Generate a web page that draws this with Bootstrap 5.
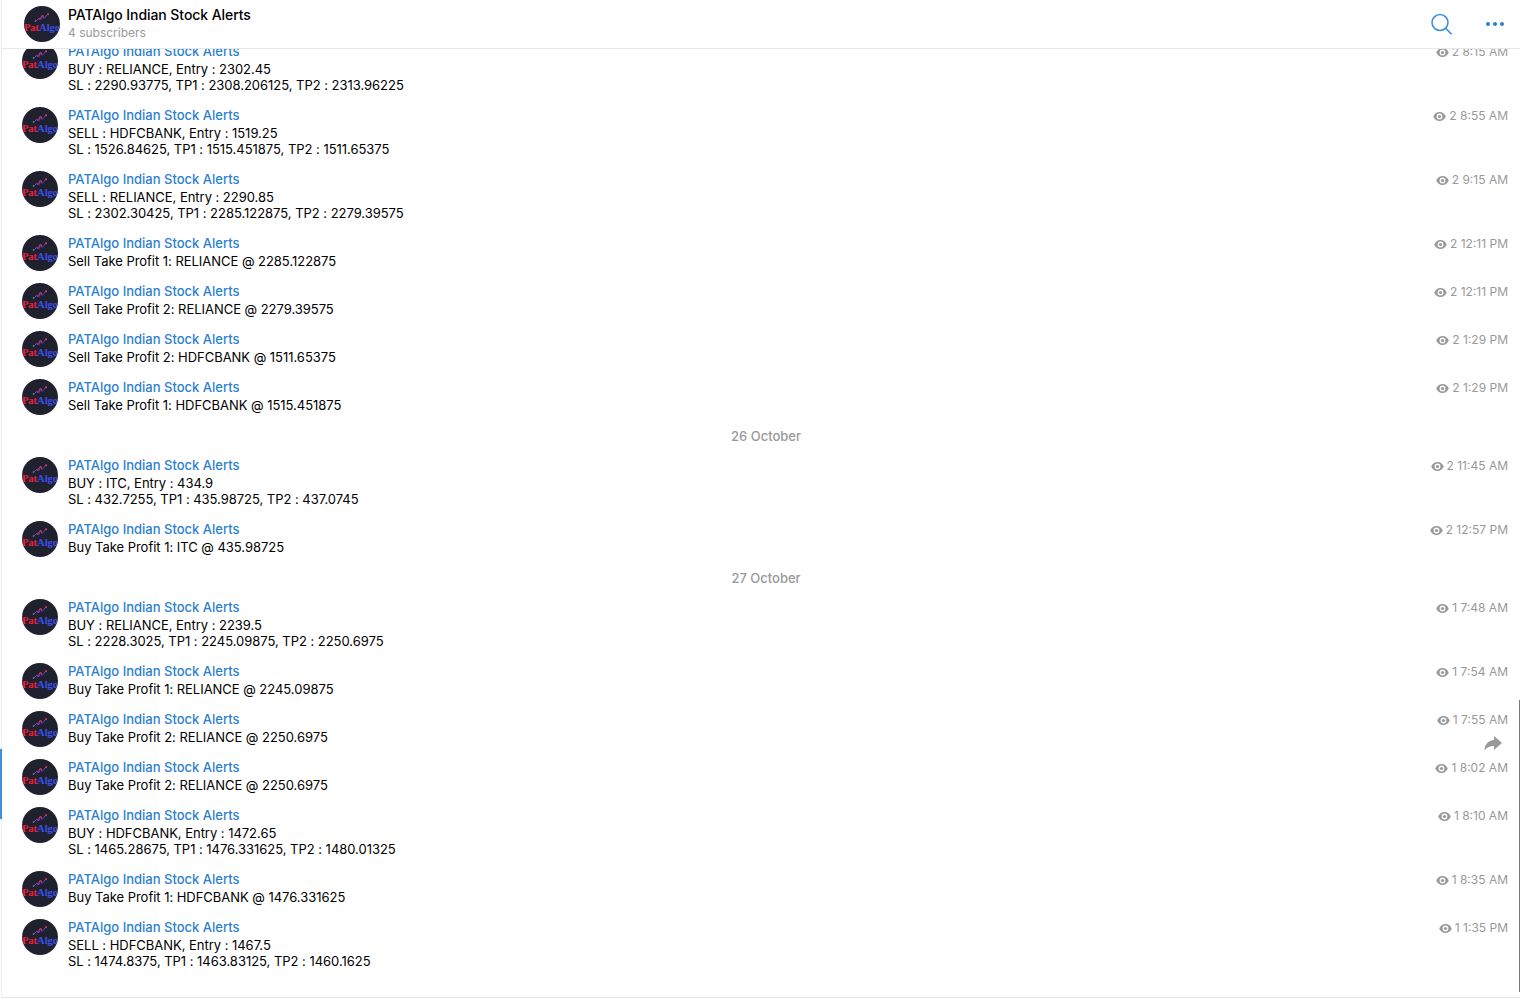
<!DOCTYPE html>
<html lang="en">
<head>
  <meta charset="UTF-8">
  <meta name="viewport" content="width=device-width, initial-scale=1.0">
  <title>PATAlgo Indian Stock Alerts</title>
  <link href="https://cdn.jsdelivr.net/npm/bootstrap@5.3.1/dist/css/bootstrap.min.css" rel="stylesheet">
  <style>
    html, body {
      height: 100%;
      overflow: hidden;
      background-color: #fff;
      font-family: Inter, "Liberation Sans", sans-serif;
    }

    .app-shell {
      height: 100vh;
      margin-left: 1px;
      border-left: 1px solid #ececec;
      border-bottom: 1px solid #e6e6e6;
    }

    .chat-head {
      height: 49px;
      flex: none;
      padding: 0 15px 0 22px;
      background-color: #fff;
      border-bottom: 1px solid #e7e7e7;
      z-index: 2;
    }

    .head-name { font-size: 14px; line-height: 18px; font-weight: 500; color: #000; letter-spacing: -.07px; margin-top: -2px; }
    .head-subs { font-size: 12px; line-height: 16px; color: #999; margin-top: 1px; }
    .head-search { margin-right: 33px; }

    .msg-list { margin-top: -14px; }

    .msg-row {
      height: 48px;
      padding: 7px 12px 0 20px;
      gap: 10px;
      font-size: 13px;
      line-height: 16px;
      letter-spacing: -.03px;
      color: #000;
    }

    .msg-row-tall { height: 64px; }

    .avatar {
      width: 36px;
      height: 36px;
      flex: none;
      margin-top: 1px;
      padding-top: 7px;
      background-color: #20212f;
      font-family: "Liberation Serif", serif;
      font-size: 10.5px;
      line-height: 10px;
      font-weight: 700;
      letter-spacing: 0;
      white-space: nowrap;
    }

    .avatar-head { margin-top: 0; margin-right: 8px; }
    .avatar-chart { width: 16px; height: 9px; margin-bottom: 1px; }
    .logo-pat { color: #f0203c; }
    .logo-algo { color: #3a50ea; }

    .msg-from { line-height: 18px; font-weight: 500; color: #2b7fd1; margin-bottom: 1px; letter-spacing: 0; }
    .msg-time { font-size: 12px; line-height: 18px; color: #999; gap: 3px; margin-top: 1px; letter-spacing: 0; }
    .eye-mark { width: 13px; height: 9px; }

    .date-sep {
      height: 30px;
      padding-top: 8px;
      padding-left: 10px;
      font-size: 13px;
      line-height: 18px;
      font-weight: 500;
      color: #999;
      text-align: center;
    }

    .unread-bar { left: -2px; top: 749px; width: 2px; height: 70px; background-color: #3d8fdc; }
    .scroll-line { right: 0; top: 700px; width: 1px; height: 292px; background-color: #777; }
    .share-arrow { right: 18px; top: 736px; width: 18px; height: 15px; z-index: 1; }
  </style>
</head>
<body>
  <svg width="0" height="0" class="position-absolute">
    <symbol id="chart" viewBox="0 0 16 9">
      <path d="M2 8l3-3 1.500 2 2.500-4.500 1 3 3.500-4" fill="none" stroke="#5a46c8" stroke-width="1"/>
      <path d="M5 7l3.500-5 1 2" fill="none" stroke="#e02b40" stroke-width="1"/>
      <circle cx="14" cy="1.200" r="1" fill="#e8455a"/>
      <circle cx="1.500" cy="8" r=".8" fill="#8d86e0"/>
    </symbol>
    <symbol id="eye" viewBox="0 0 14 10">
      <path fill-rule="evenodd" fill="#999" d="M7 0C3.700 0 1.200 2.200 0 5c1.200 2.800 3.700 5 7 5s5.800-2.200 7-5C12.800 2.200 10.300 0 7 0zm0 1.800a3.200 3.200 0 1 1 0 6.400 3.200 3.200 0 0 1 0-6.400z"/>
      <circle cx="7" cy="5" r="1.800" fill="#999"/>
    </symbol>
  </svg>

  <div class="app-shell position-relative d-flex flex-column">
    <!-- Header -->
    <header class="chat-head position-relative d-flex align-items-center">
      <div class="avatar avatar-head rounded-circle overflow-hidden d-flex flex-column align-items-center"><svg class="avatar-chart"><use href="#chart"/></svg><div><span class="logo-pat">Pat</span><span class="logo-algo">Algo</span></div></div>
      <div class="flex-grow-1">
        <div class="head-name">PATAlgo Indian Stock Alerts</div>
        <div class="head-subs">4 subscribers</div>
      </div>
      <svg width="21" height="22" viewBox="0 0 21 22" fill="none" stroke="#3d8fdc" stroke-width="1.600" class="head-search">
        <circle cx="9" cy="9.500" r="8"/>
        <path d="M14.700 15.200l5.800 6"/>
      </svg>
      <svg width="20" height="6" viewBox="0 0 20 6" fill="#2b7fd1">
        <circle cx="3" cy="3" r="2"/><circle cx="10" cy="3" r="2"/><circle cx="17" cy="3" r="2"/>
      </svg>
    </header>

    <!-- Messages -->
    <main class="msg-list">
      <div class="msg-row msg-row-tall d-flex">
        <div class="avatar rounded-circle overflow-hidden d-flex flex-column align-items-center"><svg class="avatar-chart"><use href="#chart"/></svg><div><span class="logo-pat">Pat</span><span class="logo-algo">Algo</span></div></div>
        <div class="flex-grow-1"><div class="msg-from">PATAlgo Indian Stock Alerts</div>BUY : RELIANCE, Entry : 2302.45<br>SL : 2290.93775, TP1 : 2308.206125, TP2 : 2313.96225</div>
        <div class="msg-time d-flex align-items-center align-self-start"><svg class="eye-mark"><use href="#eye"/></svg>2 8:15 AM</div>
      </div>
      <div class="msg-row msg-row-tall d-flex">
        <div class="avatar rounded-circle overflow-hidden d-flex flex-column align-items-center"><svg class="avatar-chart"><use href="#chart"/></svg><div><span class="logo-pat">Pat</span><span class="logo-algo">Algo</span></div></div>
        <div class="flex-grow-1"><div class="msg-from">PATAlgo Indian Stock Alerts</div>SELL : HDFCBANK, Entry : 1519.25<br>SL : 1526.84625, TP1 : 1515.451875, TP2 : 1511.65375</div>
        <div class="msg-time d-flex align-items-center align-self-start"><svg class="eye-mark"><use href="#eye"/></svg>2 8:55 AM</div>
      </div>
      <div class="msg-row msg-row-tall d-flex">
        <div class="avatar rounded-circle overflow-hidden d-flex flex-column align-items-center"><svg class="avatar-chart"><use href="#chart"/></svg><div><span class="logo-pat">Pat</span><span class="logo-algo">Algo</span></div></div>
        <div class="flex-grow-1"><div class="msg-from">PATAlgo Indian Stock Alerts</div>SELL : RELIANCE, Entry : 2290.85<br>SL : 2302.30425, TP1 : 2285.122875, TP2 : 2279.39575</div>
        <div class="msg-time d-flex align-items-center align-self-start"><svg class="eye-mark"><use href="#eye"/></svg>2 9:15 AM</div>
      </div>
      <div class="msg-row d-flex">
        <div class="avatar rounded-circle overflow-hidden d-flex flex-column align-items-center"><svg class="avatar-chart"><use href="#chart"/></svg><div><span class="logo-pat">Pat</span><span class="logo-algo">Algo</span></div></div>
        <div class="flex-grow-1"><div class="msg-from">PATAlgo Indian Stock Alerts</div>Sell Take Profit 1: RELIANCE @ 2285.122875</div>
        <div class="msg-time d-flex align-items-center align-self-start"><svg class="eye-mark"><use href="#eye"/></svg>2 12:11 PM</div>
      </div>
      <div class="msg-row d-flex">
        <div class="avatar rounded-circle overflow-hidden d-flex flex-column align-items-center"><svg class="avatar-chart"><use href="#chart"/></svg><div><span class="logo-pat">Pat</span><span class="logo-algo">Algo</span></div></div>
        <div class="flex-grow-1"><div class="msg-from">PATAlgo Indian Stock Alerts</div>Sell Take Profit 2: RELIANCE @ 2279.39575</div>
        <div class="msg-time d-flex align-items-center align-self-start"><svg class="eye-mark"><use href="#eye"/></svg>2 12:11 PM</div>
      </div>
      <div class="msg-row d-flex">
        <div class="avatar rounded-circle overflow-hidden d-flex flex-column align-items-center"><svg class="avatar-chart"><use href="#chart"/></svg><div><span class="logo-pat">Pat</span><span class="logo-algo">Algo</span></div></div>
        <div class="flex-grow-1"><div class="msg-from">PATAlgo Indian Stock Alerts</div>Sell Take Profit 2: HDFCBANK @ 1511.65375</div>
        <div class="msg-time d-flex align-items-center align-self-start"><svg class="eye-mark"><use href="#eye"/></svg>2 1:29 PM</div>
      </div>
      <div class="msg-row d-flex">
        <div class="avatar rounded-circle overflow-hidden d-flex flex-column align-items-center"><svg class="avatar-chart"><use href="#chart"/></svg><div><span class="logo-pat">Pat</span><span class="logo-algo">Algo</span></div></div>
        <div class="flex-grow-1"><div class="msg-from">PATAlgo Indian Stock Alerts</div>Sell Take Profit 1: HDFCBANK @ 1515.451875</div>
        <div class="msg-time d-flex align-items-center align-self-start"><svg class="eye-mark"><use href="#eye"/></svg>2 1:29 PM</div>
      </div>

      <div class="date-sep">26 October</div>

      <div class="msg-row msg-row-tall d-flex">
        <div class="avatar rounded-circle overflow-hidden d-flex flex-column align-items-center"><svg class="avatar-chart"><use href="#chart"/></svg><div><span class="logo-pat">Pat</span><span class="logo-algo">Algo</span></div></div>
        <div class="flex-grow-1"><div class="msg-from">PATAlgo Indian Stock Alerts</div>BUY : ITC, Entry : 434.9<br>SL : 432.7255, TP1 : 435.98725, TP2 : 437.0745</div>
        <div class="msg-time d-flex align-items-center align-self-start"><svg class="eye-mark"><use href="#eye"/></svg>2 11:45 AM</div>
      </div>
      <div class="msg-row d-flex">
        <div class="avatar rounded-circle overflow-hidden d-flex flex-column align-items-center"><svg class="avatar-chart"><use href="#chart"/></svg><div><span class="logo-pat">Pat</span><span class="logo-algo">Algo</span></div></div>
        <div class="flex-grow-1"><div class="msg-from">PATAlgo Indian Stock Alerts</div>Buy Take Profit 1: ITC @ 435.98725</div>
        <div class="msg-time d-flex align-items-center align-self-start"><svg class="eye-mark"><use href="#eye"/></svg>2 12:57 PM</div>
      </div>

      <div class="date-sep">27 October</div>

      <div class="msg-row msg-row-tall d-flex">
        <div class="avatar rounded-circle overflow-hidden d-flex flex-column align-items-center"><svg class="avatar-chart"><use href="#chart"/></svg><div><span class="logo-pat">Pat</span><span class="logo-algo">Algo</span></div></div>
        <div class="flex-grow-1"><div class="msg-from">PATAlgo Indian Stock Alerts</div>BUY : RELIANCE, Entry : 2239.5<br>SL : 2228.3025, TP1 : 2245.09875, TP2 : 2250.6975</div>
        <div class="msg-time d-flex align-items-center align-self-start"><svg class="eye-mark"><use href="#eye"/></svg>1 7:48 AM</div>
      </div>
      <div class="msg-row d-flex">
        <div class="avatar rounded-circle overflow-hidden d-flex flex-column align-items-center"><svg class="avatar-chart"><use href="#chart"/></svg><div><span class="logo-pat">Pat</span><span class="logo-algo">Algo</span></div></div>
        <div class="flex-grow-1"><div class="msg-from">PATAlgo Indian Stock Alerts</div>Buy Take Profit 1: RELIANCE @ 2245.09875</div>
        <div class="msg-time d-flex align-items-center align-self-start"><svg class="eye-mark"><use href="#eye"/></svg>1 7:54 AM</div>
      </div>
      <div class="msg-row d-flex">
        <div class="avatar rounded-circle overflow-hidden d-flex flex-column align-items-center"><svg class="avatar-chart"><use href="#chart"/></svg><div><span class="logo-pat">Pat</span><span class="logo-algo">Algo</span></div></div>
        <div class="flex-grow-1"><div class="msg-from">PATAlgo Indian Stock Alerts</div>Buy Take Profit 2: RELIANCE @ 2250.6975</div>
        <div class="msg-time d-flex align-items-center align-self-start"><svg class="eye-mark"><use href="#eye"/></svg>1 7:55 AM</div>
      </div>
      <div class="msg-row d-flex">
        <div class="avatar rounded-circle overflow-hidden d-flex flex-column align-items-center"><svg class="avatar-chart"><use href="#chart"/></svg><div><span class="logo-pat">Pat</span><span class="logo-algo">Algo</span></div></div>
        <div class="flex-grow-1"><div class="msg-from">PATAlgo Indian Stock Alerts</div>Buy Take Profit 2: RELIANCE @ 2250.6975</div>
        <div class="msg-time d-flex align-items-center align-self-start"><svg class="eye-mark"><use href="#eye"/></svg>1 8:02 AM</div>
      </div>
      <div class="msg-row msg-row-tall d-flex">
        <div class="avatar rounded-circle overflow-hidden d-flex flex-column align-items-center"><svg class="avatar-chart"><use href="#chart"/></svg><div><span class="logo-pat">Pat</span><span class="logo-algo">Algo</span></div></div>
        <div class="flex-grow-1"><div class="msg-from">PATAlgo Indian Stock Alerts</div>BUY : HDFCBANK, Entry : 1472.65<br>SL : 1465.28675, TP1 : 1476.331625, TP2 : 1480.01325</div>
        <div class="msg-time d-flex align-items-center align-self-start"><svg class="eye-mark"><use href="#eye"/></svg>1 8:10 AM</div>
      </div>
      <div class="msg-row d-flex">
        <div class="avatar rounded-circle overflow-hidden d-flex flex-column align-items-center"><svg class="avatar-chart"><use href="#chart"/></svg><div><span class="logo-pat">Pat</span><span class="logo-algo">Algo</span></div></div>
        <div class="flex-grow-1"><div class="msg-from">PATAlgo Indian Stock Alerts</div>Buy Take Profit 1: HDFCBANK @ 1476.331625</div>
        <div class="msg-time d-flex align-items-center align-self-start"><svg class="eye-mark"><use href="#eye"/></svg>1 8:35 AM</div>
      </div>
      <div class="msg-row msg-row-tall d-flex">
        <div class="avatar rounded-circle overflow-hidden d-flex flex-column align-items-center"><svg class="avatar-chart"><use href="#chart"/></svg><div><span class="logo-pat">Pat</span><span class="logo-algo">Algo</span></div></div>
        <div class="flex-grow-1"><div class="msg-from">PATAlgo Indian Stock Alerts</div>SELL : HDFCBANK, Entry : 1467.5<br>SL : 1474.8375, TP1 : 1463.83125, TP2 : 1460.1625</div>
        <div class="msg-time d-flex align-items-center align-self-start"><svg class="eye-mark"><use href="#eye"/></svg>1 1:35 PM</div>
      </div>
    </main>

    <!-- Hover action and scroll markers -->
    <svg class="share-arrow position-absolute" viewBox="0 0 18 15" fill="#999">
      <path d="M10 0l8 7-8 7v-4C6 10 3 11 .5 14.500 .5 9 4 4.500 10 4z"/>
    </svg>
    <div class="unread-bar position-absolute"></div>
    <div class="scroll-line position-absolute"></div>
  </div>

  <script src="https://cdn.jsdelivr.net/npm/bootstrap@5.3.1/dist/js/bootstrap.bundle.min.js"></script>
</body>
</html>
